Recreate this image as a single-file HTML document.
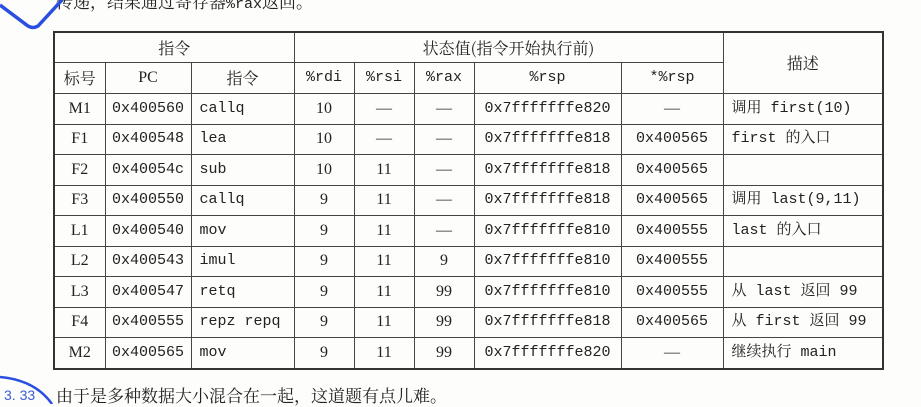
<!DOCTYPE html>
<html><head><meta charset="utf-8"><style>
body{margin:0;width:921px;height:404px;background:#fdfdfb;position:relative;overflow:hidden;font-family:"Liberation Serif","Noto Serif CJK SC",serif;color:#222}
table{position:absolute;left:53px;top:31px;border-collapse:collapse;table-layout:fixed;width:829px;border:2px solid #333}
td{border:1.3px solid #444;text-align:center;padding:0;font-size:16px;height:29.5px;line-height:20px;white-space:nowrap;overflow:hidden}
.m{font-family:"Liberation Mono",monospace;font-size:15px}
.l{text-align:left;padding-left:8px}
.c{font-family:"Noto Serif CJK SC",serif;font-size:16px}
.d{font-family:"Liberation Mono","Noto Serif CJK SC",monospace;font-size:15px;text-align:left;padding-left:8px}
.top{position:absolute;left:56px;top:-12px;font-size:17px;font-family:"Noto Serif CJK SC",serif}
.bot{position:absolute;left:56px;top:382px;font-size:17px;font-family:"Noto Serif CJK SC",serif}
</style></head><body>
<div class="top">传递，结果通过寄存器<span class="m">%rax</span>返回。</div>
<svg width="921" height="404" style="position:absolute;left:0;top:0">
<path d="M0 5 L28 26 Q33 29 38 26 L62 0" stroke="#2a4fe0" stroke-width="3.5" fill="none"/>
<path d="M0 377 Q35 380 52 404" stroke="#2a4fe0" stroke-width="2.5" fill="none"/>
<text x="4" y="400" font-family="Liberation Sans" font-size="14" fill="#3a5ad8">3. 33</text>
</svg>
<div class="bot">由于是多种数据大小混合在一起，这道题有点儿难。</div>
<table>
<colgroup><col style="width:51px"><col style="width:86px"><col style="width:103px"><col style="width:60px"><col style="width:60px"><col style="width:60px"><col style="width:147px"><col style="width:102px"><col style="width:160px"></colgroup>
<tr><td colspan="3" class="c" style="height:29px">指令</td><td colspan="5" class="c" style="height:29px">状态值(指令开始执行前)</td><td rowspan="2" class="c">描述</td></tr>
<tr><td class="c" style="height:30px">标号</td><td>PC</td><td class="c">指令</td><td class="m">%rdi</td><td class="m">%rsi</td><td class="m">%rax</td><td class="m">%rsp</td><td class="m">*%rsp</td></tr>
<tr><td>M1</td><td class="m">0x400560</td><td class="m l">callq</td><td>10</td><td>—</td><td>—</td><td class="m">0x7fffffffe820</td><td>—</td><td class="d">调用 first(10)</td></tr>
<tr><td>F1</td><td class="m">0x400548</td><td class="m l">lea</td><td>10</td><td>—</td><td>—</td><td class="m">0x7fffffffe818</td><td class="m">0x400565</td><td class="d">first 的入口</td></tr>
<tr><td>F2</td><td class="m">0x40054c</td><td class="m l">sub</td><td>10</td><td>11</td><td>—</td><td class="m">0x7fffffffe818</td><td class="m">0x400565</td><td class="d"></td></tr>
<tr><td>F3</td><td class="m">0x400550</td><td class="m l">callq</td><td>9</td><td>11</td><td>—</td><td class="m">0x7fffffffe818</td><td class="m">0x400565</td><td class="d">调用 last(9,11)</td></tr>
<tr><td>L1</td><td class="m">0x400540</td><td class="m l">mov</td><td>9</td><td>11</td><td>—</td><td class="m">0x7fffffffe810</td><td class="m">0x400555</td><td class="d">last 的入口</td></tr>
<tr><td>L2</td><td class="m">0x400543</td><td class="m l">imul</td><td>9</td><td>11</td><td>9</td><td class="m">0x7fffffffe810</td><td class="m">0x400555</td><td class="d"></td></tr>
<tr><td>L3</td><td class="m">0x400547</td><td class="m l">retq</td><td>9</td><td>11</td><td>99</td><td class="m">0x7fffffffe810</td><td class="m">0x400555</td><td class="d">从 last 返回 99</td></tr>
<tr><td>F4</td><td class="m">0x400555</td><td class="m l">repz repq</td><td>9</td><td>11</td><td>99</td><td class="m">0x7fffffffe818</td><td class="m">0x400565</td><td class="d">从 first 返回 99</td></tr>
<tr><td>M2</td><td class="m">0x400565</td><td class="m l">mov</td><td>9</td><td>11</td><td>99</td><td class="m">0x7fffffffe820</td><td>—</td><td class="d">继续执行 main</td></tr>
</table>
</body></html>
